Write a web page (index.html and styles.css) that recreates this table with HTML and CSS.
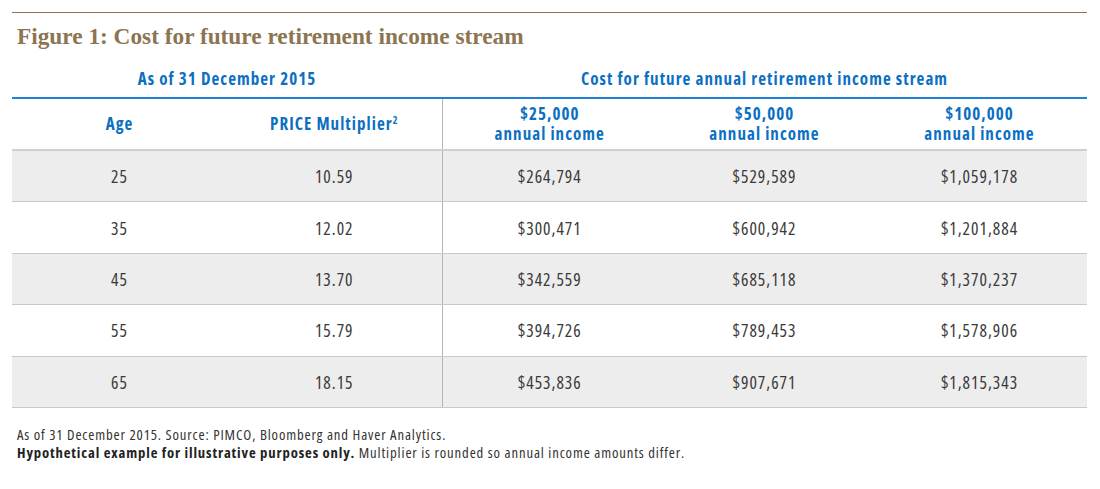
FILE: index.html
```html
<!DOCTYPE html>
<html>
<head>
<meta charset="utf-8">
<link rel="stylesheet" href="styles.css">
</head>
<body>
<div class="figure">
  <h1 class="title">Figure 1: Cost for future retirement income stream</h1>
  <table class="tbl">
    <colgroup><col><col><col><col><col></colgroup>
    <thead>
      <tr class="group">
        <th colspan="2">As of 31 December 2015</th>
        <th colspan="3">Cost for future annual retirement income stream</th>
      </tr>
      <tr class="heads">
        <th>Age</th>
        <th>PRICE Multiplier<sup>2</sup></th>
        <th class="split">$25,000<br>annual income</th>
        <th>$50,000<br>annual income</th>
        <th>$100,000<br>annual income</th>
      </tr>
    </thead>
    <tbody>
      <tr class="shade"><td>25</td><td>10.59</td><td class="split">$264,794</td><td>$529,589</td><td>$1,059,178</td></tr>
      <tr><td>35</td><td>12.02</td><td class="split">$300,471</td><td>$600,942</td><td>$1,201,884</td></tr>
      <tr class="shade"><td>45</td><td>13.70</td><td class="split">$342,559</td><td>$685,118</td><td>$1,370,237</td></tr>
      <tr><td>55</td><td>15.79</td><td class="split">$394,726</td><td>$789,453</td><td>$1,578,906</td></tr>
      <tr class="shade"><td>65</td><td>18.15</td><td class="split">$453,836</td><td>$907,671</td><td>$1,815,343</td></tr>
    </tbody>
  </table>
  <div class="notes">
    <p>As of 31 December 2015. Source: PIMCO, Bloomberg and Haver Analytics.</p>
    <p><b>Hypothetical example for illustrative purposes only.</b> Multiplier is rounded so annual income amounts differ.</p>
  </div>
</div>
</body>
</html>
```
FILE: styles.css
```css
html, body {
  margin: 0;
  padding: 0;
  background: #ffffff;
}
.figure {
  width: 1075px;
  margin: 12px 0 0 12px;
  border-top: 1.5px solid #8b7552;
}
.title {
  margin: 0;
  padding: 9px 0 0 5px;
  height: 28px;
  font-family: "Liberation Serif", "Times New Roman", serif;
  font-weight: bold;
  font-size: 23.3px;
  line-height: 28px;
  color: #8b7552;
}
.tbl {
  width: 1075px;
  border-collapse: collapse;
  table-layout: fixed;
  margin-top: 11px;
  font-family: "Open Sans", sans-serif;
  font-stretch: 75%;
  font-size: 17px;
}
.tbl col { width: 215px; }
.tbl th {
  color: #0b6fc3;
  font-weight: 700;
  letter-spacing: 1.05px;
  text-align: center;
  padding: 0;
}
.group th {
  height: 36px;
  line-height: 20px;
  vertical-align: middle;
  border-bottom: 2px solid #1e80d6;
}
.heads th {
  height: 50px;
  line-height: 20px;
  vertical-align: middle;
  border-bottom: 2px solid #d0d0d0;
}
.heads sup {
  font-size: 10px;
  vertical-align: top;
  line-height: 10px;
  position: relative;
  top: 1px;
}
.tbl td {
  height: 50.4px;
  padding: 0;
  text-align: center;
  vertical-align: middle;
  color: #3a3a3a;
  font-size: 17.5px;
  letter-spacing: 1px;
  border-bottom: 1.6px solid #c9c9c9;
}
.tbl tr.shade td { background: #ededed; }
.tbl .split { border-left: 1px solid #b4b4b4; }
.notes {
  margin-top: 17px;
  padding-left: 5px;
  font-family: "Open Sans", sans-serif;
  font-stretch: 75%;
  font-size: 14.7px;
  line-height: 18px;
  letter-spacing: 0.87px;
  color: #333333;
}
.notes p { margin: 0; }
.notes b { color: #222222; font-weight: 700; }
```
